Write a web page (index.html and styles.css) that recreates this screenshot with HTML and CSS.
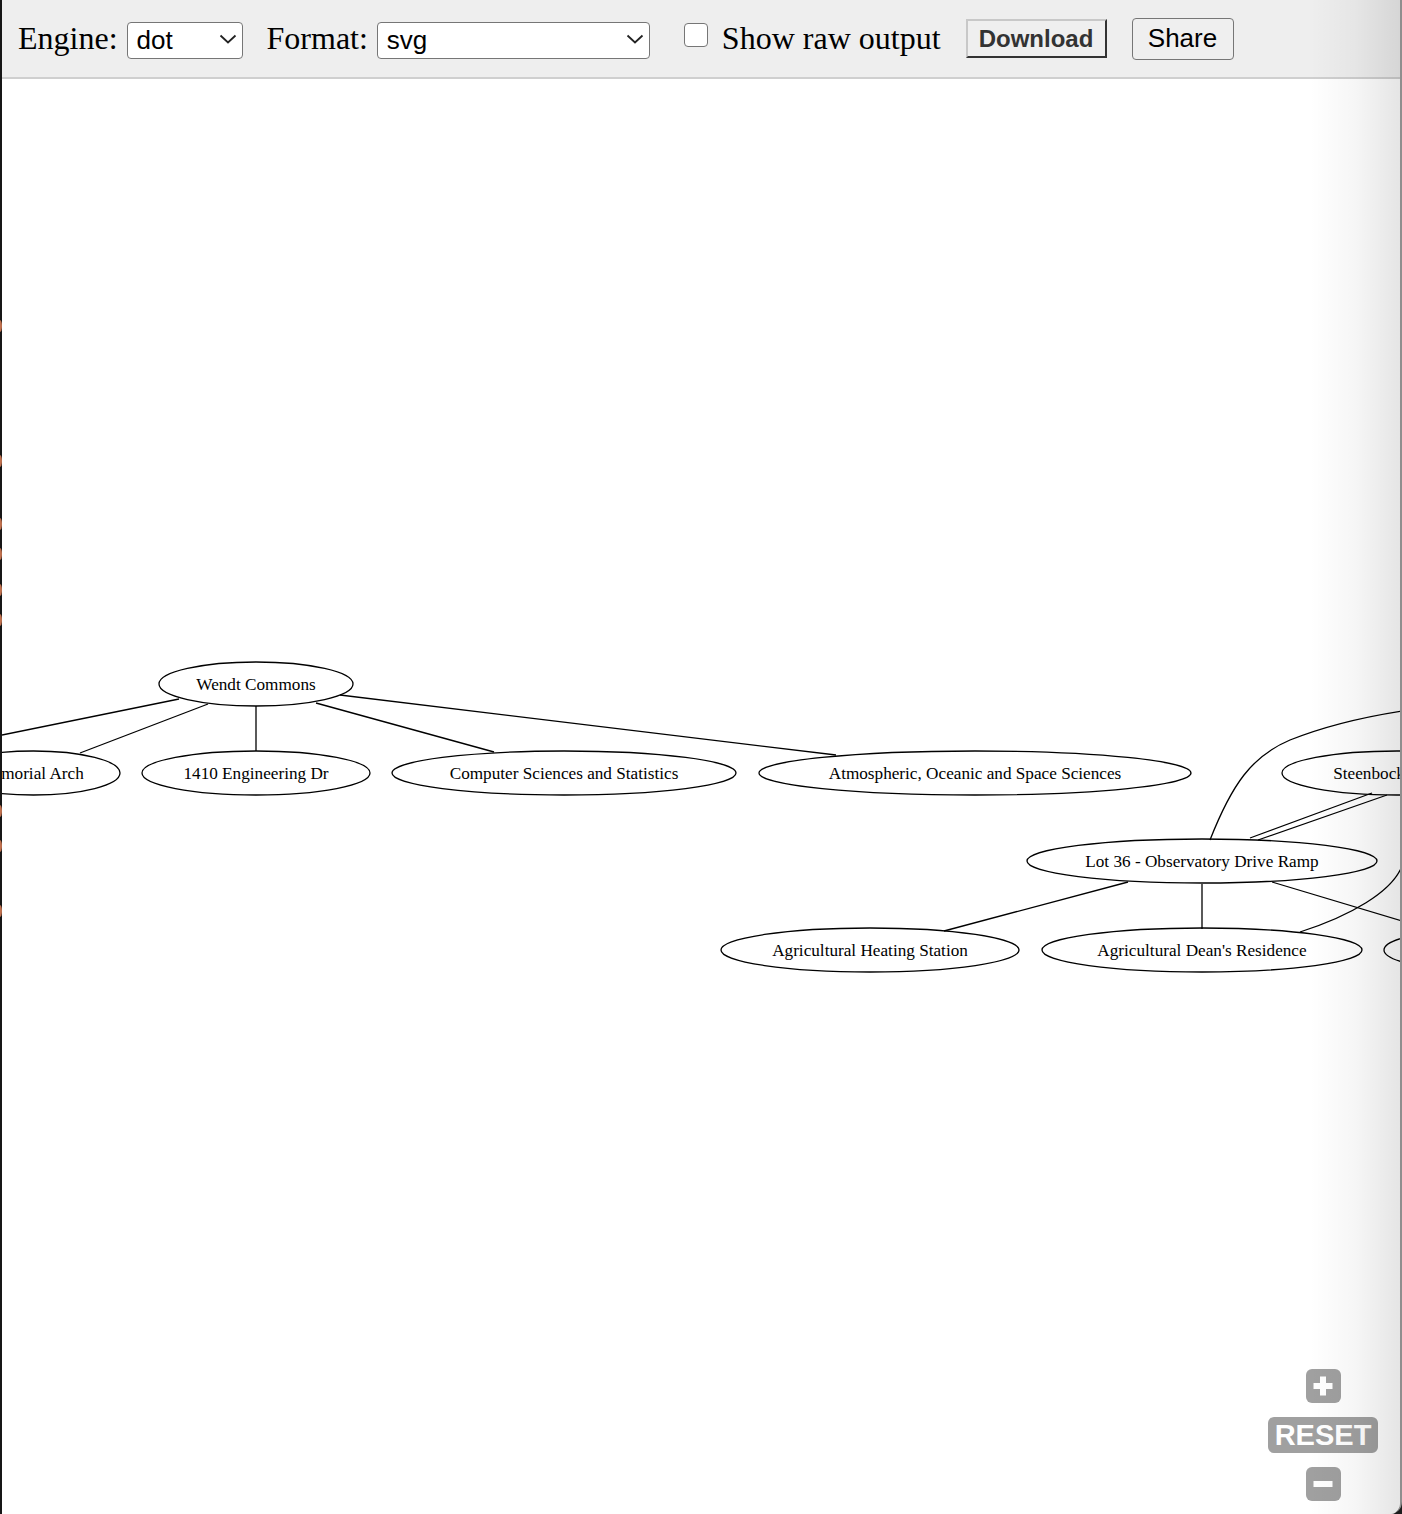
FILE: index.html
```html
<!DOCTYPE html>
<html>
<head>
<meta charset="utf-8">
<title>Graphviz</title>
<link rel="stylesheet" href="styles.css">
</head>
<body>
<div class="screen">
  <div class="edge-left">
    <span class="mark m1"></span><span class="mark m2"></span><span class="mark m3"></span>
    <span class="mark m4"></span><span class="mark m5"></span><span class="mark m6"></span>
    <span class="mark m7"></span><span class="mark m8"></span><span class="mark m9"></span>
  </div>
  <div class="frame">
    <div class="toolbar">
      <label class="label">Engine:</label>
      <div class="select-wrap engine">
        <select class="select"><option>dot</option></select>
        <svg class="chev" width="18" height="10" viewBox="0 0 18 10"><path d="M1.5 1.5 L9 8.5 L16.5 1.5" fill="none" stroke="#222" stroke-width="1.8"/></svg>
      </div>
      <label class="label format-label">Format:</label>
      <div class="select-wrap format">
        <select class="select"><option>svg</option></select>
        <svg class="chev" width="18" height="10" viewBox="0 0 18 10"><path d="M1.5 1.5 L9 8.5 L16.5 1.5" fill="none" stroke="#222" stroke-width="1.8"/></svg>
      </div>
      <span class="checkbox"></span>
      <span class="label raw">Show raw output</span>
      <button class="btn-download">Download</button>
      <button class="btn-share">Share</button>
    </div>
    <div class="canvas">
      <svg class="graph" width="1398" height="1435" viewBox="2 79 1398 1435">
        <g fill="none" stroke="#000" stroke-width="1.3">
          <path d="M179 699 L2 735"/>
          <path d="M208 704 L80 753"/>
          <path d="M256 706 L256 751"/>
          <path d="M316 703 L494 752"/>
          <path d="M340 695 L836 755"/>
          <path d="M1210 840 C1232 784 1252 756 1290 740 C1330 724 1370 716 1402 711"/>
          <path d="M1250 838 L1372 793"/>
          <path d="M1258 840 L1387 795"/>
          <path d="M1128 882 L944 931"/>
          <path d="M1202 884 L1202 929"/>
          <path d="M1272 882 L1402 921"/>
          <path d="M1300 932 C1350 916 1392 892 1402 866"/>
          <ellipse cx="256" cy="684" rx="97" ry="22"/>
          <ellipse cx="33.5" cy="773" rx="86.5" ry="22"/>
          <ellipse cx="256" cy="773" rx="114" ry="22"/>
          <ellipse cx="564" cy="773" rx="172" ry="22"/>
          <ellipse cx="975" cy="773" rx="216" ry="22"/>
          <ellipse cx="1397" cy="773" rx="115" ry="22"/>
          <ellipse cx="1202" cy="861" rx="175" ry="22"/>
          <ellipse cx="870" cy="950" rx="149" ry="22"/>
          <ellipse cx="1202" cy="950" rx="160" ry="22"/>
          <ellipse cx="1500" cy="950" rx="116" ry="22"/>
        </g>
        <g class="labels" text-anchor="middle">
          <text x="256" y="690">Wendt Commons</text>
          <text x="31" y="779">Memorial Arch</text>
          <text x="256" y="779">1410 Engineering Dr</text>
          <text x="564" y="779">Computer Sciences and Statistics</text>
          <text x="975" y="779">Atmospheric, Oceanic and Space Sciences</text>
          <text x="1397" y="779">Steenbock Library</text>
          <text x="1202" y="867">Lot 36 - Observatory Drive Ramp</text>
          <text x="870" y="956">Agricultural Heating Station</text>
          <text x="1202" y="956">Agricultural Dean's Residence</text>
        </g>
      </svg>
      <div class="zoom">
        <div class="zbtn">
          <svg width="24" height="24" viewBox="0 0 24 24"><path d="M12 2.5 V21.5 M2.5 12 H21.5" stroke="#fff" stroke-width="6"/></svg>
        </div>
        <div class="reset">RESET</div>
        <div class="zbtn">
          <svg width="24" height="24" viewBox="0 0 24 24"><path d="M2.5 12 H21.5" stroke="#fff" stroke-width="6"/></svg>
        </div>
      </div>
    </div>
    <div class="shade"></div>
  </div>
</div>
</body>
</html>
```
FILE: styles.css
```css
html, body {
  margin: 0;
  padding: 0;
  background: #1c1c1c;
}
.screen {
  position: relative;
  display: flex;
  width: 1402px;
  height: 1514px;
  overflow: hidden;
  background: #1c1c1c;
}
.edge-left {
  position: relative;
  width: 2px;
  flex: none;
  background: #161616;
}
.mark {
  position: absolute;
  left: -2px;
  width: 4px;
  height: 12px;
  border-radius: 50%;
  background: #c0714f;
}
.m1 { top: 320px; } .m2 { top: 455px; } .m3 { top: 518px; }
.m4 { top: 548px; } .m5 { top: 584px; } .m6 { top: 614px; }
.m7 { top: 805px; } .m8 { top: 840px; } .m9 { top: 905px; }
.frame {
  position: relative;
  width: 1398px;
  height: 1514px;
  flex: none;
  display: flex;
  flex-direction: column;
  background: #fff;
  border-right: 2px solid #8e8e8e;
  box-sizing: content-box;
  border-bottom-right-radius: 12px;
  overflow: hidden;
}
.toolbar {
  height: 77px;
  flex: none;
  display: flex;
  align-items: center;
  padding-left: 16px;
  background: #eeeeee;
  border-bottom: 2px solid #cfcfcf;
  font-family: "Liberation Serif", "Times New Roman", serif;
  font-size: 32px;
  color: #000;
}
.label {
  white-space: nowrap;
}
.format-label {
  margin-left: 24px;
}
.select-wrap {
  position: relative;
  height: 37px;
  margin-left: 9px;
}
.select-wrap.engine { width: 116px; }
.select-wrap.format { width: 273px; }
.select {
  appearance: none;
  -webkit-appearance: none;
  width: 100%;
  height: 37px;
  box-sizing: border-box;
  border: 1px solid #767676;
  border-radius: 4px;
  background: #fff;
  font-family: "Liberation Sans", Arial, sans-serif;
  font-size: 26px;
  color: #000;
  padding: 0 0 0 9px;
  line-height: 35px;
  margin: 0;
}
.chev {
  position: absolute;
  right: 6px;
  top: 14px;
  pointer-events: none;
}
.checkbox {
  width: 22px;
  height: 22px;
  border: 1.5px solid #767676;
  border-radius: 4px;
  background: #fff;
  margin-left: 34px;
  margin-bottom: 7px;
  flex: none;
}
.raw {
  margin-left: 14px;
}
.btn-download {
  margin-left: 25px;
  width: 141px;
  height: 39px;
  box-sizing: border-box;
  background: #efefef;
  border-style: solid;
  border-width: 2px;
  border-color: #c8c8c8 #333 #333 #c8c8c8;
  font-family: "Liberation Sans", Arial, sans-serif;
  font-weight: bold;
  font-size: 24px;
  color: #333;
  padding: 0;
}
.btn-share {
  margin-left: 25px;
  width: 102px;
  height: 42px;
  box-sizing: border-box;
  background: #efefef;
  border: 1.5px solid #767676;
  border-radius: 4px;
  font-family: "Liberation Sans", Arial, sans-serif;
  font-size: 26px;
  color: #000;
  padding: 0;
}
.canvas {
  position: relative;
  flex: 1;
  background: #fff;
}
.graph {
  display: block;
}
.labels text {
  font-family: "Liberation Serif", "Times New Roman", serif;
  font-size: 17.2px;
  fill: #000;
}
.zoom {
  position: absolute;
  right: 22px;
  top: 1290px;
  width: 110px;
  display: flex;
  flex-direction: column;
  align-items: center;
  gap: 14px;
}
.zbtn {
  width: 35px;
  height: 34px;
  border-radius: 6px;
  background: #a0a0a0;
  display: flex;
  align-items: center;
  justify-content: center;
}
.reset {
  width: 110px;
  height: 36px;
  border-radius: 6px;
  background: #a0a0a0;
  color: #fff;
  font-family: "Liberation Sans", Arial, sans-serif;
  font-weight: bold;
  font-size: 29px;
  line-height: 36px;
  text-align: center;
}
.shade {
  position: absolute;
  top: 0;
  right: 0;
  width: 90px;
  height: 100%;
  pointer-events: none;
  background: linear-gradient(to right, rgba(0,0,0,0), rgba(0,0,0,0.035) 50%, rgba(0,0,0,0.1));
}
```
